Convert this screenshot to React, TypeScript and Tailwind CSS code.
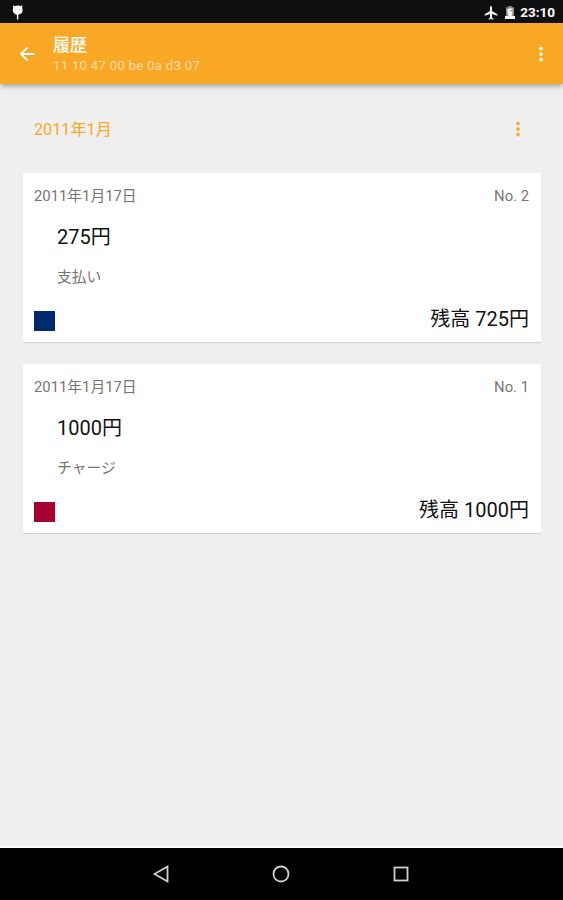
import React from 'react';

type Entry = {
    no: number;
    date: string;
    amount: string;
    kind: string;
    balance: string;
    marker: string;
};

const entries: Entry[] = [
    { no: 2, date: '2011年1月17日', amount: '275円', kind: '支払い', balance: '残高 725円', marker: 'bg-[#002a6e]' },
    { no: 1, date: '2011年1月17日', amount: '1000円', kind: 'チャージ', balance: '残高 1000円', marker: 'bg-[#a50030]' },
];

function MoreIcon({ className }: { className: string }) {
    return (
        <svg viewBox="0 0 24 24" fill="currentColor" className={className}>
            <path d="M12 8c1.1 0 2-.9 2-2s-.9-2-2-2-2 .9-2 2 .9 2 2 2zm0 2c-1.1 0-2 .9-2 2s.9 2 2 2 2-.9 2-2-.9-2-2-2zm0 6c-1.1 0-2 .9-2 2s.9 2 2 2 2-.9 2-2-.9-2-2-2z" />
        </svg>
    );
}

function StatusBar() {
    return (
        <div className="flex h-[23px] items-center justify-between bg-[#0f0f0f] pl-3 pr-2 text-white">
            {/* Debug notification: small robot head on a stick */}
            <svg width="12" height="16" viewBox="0 0 12 16" fill="#fff">
                <path d="M1.200 1 2.800 2.200Q6 .8 8.700 2.200L10.300 1 10.200 4Q11.500 7.500 8.900 9.700L6.300 10.700V15.500H4.900V10.700L2.400 9.700Q-.1 7.500 1.200 4z" />
                <circle cx="3.900" cy="5.500" r=".5" fill="#aaa" />
                <circle cx="7.300" cy="5.500" r=".5" fill="#aaa" />
            </svg>
            <div className="flex items-center pt-0.5">
                <svg width="16" height="16" viewBox="0 0 24 24" fill="#f2f2f2">
                    <path d="M21.500 16v-2l-8-5V3.500c0-.83-.67-1.500-1.500-1.500S10.500 2.670 10.500 3.500V9l-8 5v2l8-2.500V19l-2 1.500V22l3.500-1 3.500 1v-1.500L13.500 19v-5.500l8 2.500z" />
                </svg>
                <svg width="10" height="14" viewBox="0 0 10 14" className="ml-[6px]">
                    <path d="M3.200 0h3.600v1.300H9V10H1V1.300h2.200z" fill="#8c8c8c" />
                    <path d="M0 10h3.200V8.500L2.500 7V3.500L4 2.500h3.500V4H5.200v1.200h2.300V7L6.800 8.500V10H10v3H0z" fill="#f5f5f5" />
                </svg>
                <span className="ml-[5px] text-[13.500px] font-bold leading-none">23:10</span>
            </div>
        </div>
    );
}

function AppBar() {
    return (
        <header className="relative flex h-[61px] items-center bg-[#f9a825] pl-[16px] pr-[11px] text-white shadow-[0_3px_5px_-1px_rgba(0,0,0,0.35)]">
            <svg width="22" height="22" viewBox="0 0 24 24" fill="currentColor">
                <path d="M20 11H7.830l5.590-5.590L12 4l-8 8 8 8 1.410-1.410L7.830 13H20v-2z" />
            </svg>
            <div className="ml-[15px] flex-1 pt-0.5">
                <h1 className="text-[17px] font-medium leading-[22px]">履歴</h1>
                <p className="text-[13.200px] leading-[20px] tracking-[0.27px] text-white/60">11 10 47 00 be 0a d3 07</p>
            </div>
            <MoreIcon className="h-[22px] w-[22px]" />
        </header>
    );
}

function EntryCard({ entry }: { entry: Entry }) {
    return (
        <article className="flex h-[169px] flex-col rounded-[1px] bg-white pb-[9px] pl-[11px] pr-3 pt-3 shadow-[0_1px_1px_rgba(0,0,0,0.14)]">
            <div className="flex justify-between text-[14.800px] leading-[22px] text-[#757575]">
                <span>{entry.date}</span>
                <span>No. {entry.no}</span>
            </div>
            <p className="mt-[15px] pl-[23px] text-[20px] leading-[30px] text-[#111]">{entry.amount}</p>
            <p className="mt-[14px] pl-[23px] text-[14.800px] leading-[22px] text-[#757575]">{entry.kind}</p>
            <div className="mt-auto flex items-end justify-between">
                <span className={`mb-[2px] h-5 w-[21px] ${entry.marker}`} />
                <span className="text-[20px] leading-[28px] text-[#111]">{entry.balance}</span>
            </div>
        </article>
    );
}

function NavBar() {
    return (
        <nav className="flex h-[54px] items-center justify-center gap-[96px] border-t-2 border-white bg-black pr-px">
            <svg width="24" height="24" viewBox="0 0 24 24" fill="none" stroke="#d0d0d0" strokeWidth="1.800">
                <path d="M5.500 12 18.500 4.500v15z" />
            </svg>
            <svg width="24" height="24" viewBox="0 0 24 24" fill="none" stroke="#d0d0d0" strokeWidth="1.800">
                <circle cx="12" cy="12" r="7.500" />
            </svg>
            <svg width="24" height="24" viewBox="0 0 24 24" fill="none" stroke="#d0d0d0" strokeWidth="1.800">
                <rect x="5.500" y="5.500" width="13" height="13" />
            </svg>
        </nav>
    );
}

export default function App() {
    return (
        <div className="flex h-[900px] w-[563px] flex-col overflow-hidden bg-[#efefef] font-[Roboto,'Noto_Sans_CJK_JP',sans-serif]">
            <StatusBar />
            <AppBar />
            <main className="flex-1 pl-[23px] pr-[22px]">
                <div className="flex h-[89px] items-center justify-between pl-[11px] pr-3">
                    <h2 className="pt-0.5 text-[16.200px] leading-6 text-[#f9a825]">2011年1月</h2>
                    <MoreIcon className="h-[22px] w-[22px] text-[#f9a825]" />
                </div>
                <div className="flex flex-col gap-[22px]">
                    {entries.map((entry) => (
                        <EntryCard key={entry.no} entry={entry} />
                    ))}
                </div>
            </main>
            <NavBar />
        </div>
    );
}
